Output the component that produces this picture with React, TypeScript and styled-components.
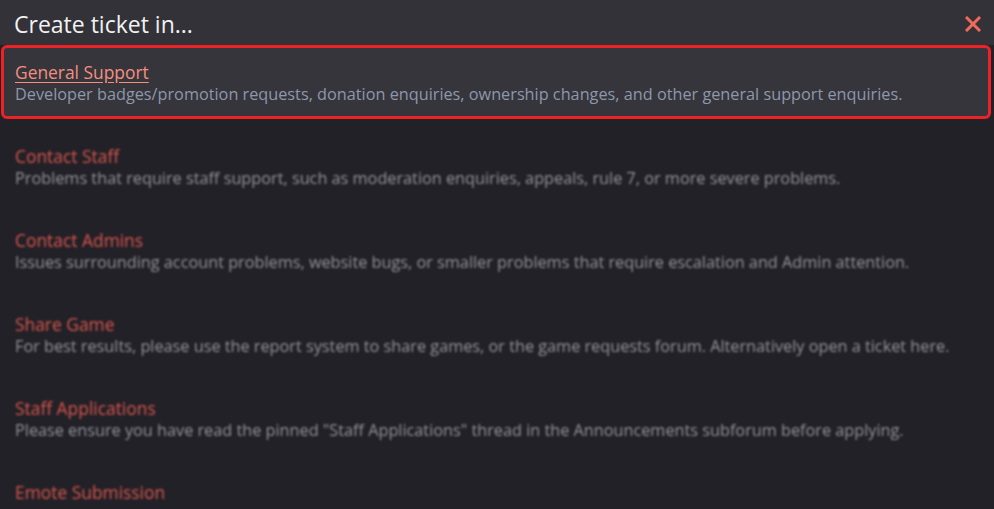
import React from "react";
import styled, { createGlobalStyle } from "styled-components";

interface TicketCategory {
  title: string;
  description?: string;
}

const categories: TicketCategory[] = [
  {
    title: "General Support",
    description:
      "Developer badges/promotion requests, donation enquiries, ownership changes, and other general support enquiries.",
  },
  {
    title: "Contact Staff",
    description:
      "Problems that require staff support, such as moderation enquiries, appeals, rule 7, or more severe problems.",
  },
  {
    title: "Contact Admins",
    description:
      "Issues surrounding account problems, website bugs, or smaller problems that require escalation and Admin attention.",
  },
  {
    title: "Share Game",
    description:
      "For best results, please use the report system to share games, or the game requests forum. Alternatively open a ticket here.",
  },
  {
    title: "Staff Applications",
    description:
      'Please ensure you have read the pinned "Staff Applications" thread in the Announcements subforum before applying.',
  },
  // description sits below the fold in the screenshot
  { title: "Emote Submission" },
];

const GlobalStyle = createGlobalStyle`
  html, body {
    margin: 0;
    padding: 0;
    background-color: #222127;
    overflow: hidden;
  }
  body {
    font-family: "Open Sans", "Noto Sans", sans-serif;
  }
`;

const Dialog = styled.div`
  width: 994px;
  height: 509px;
  overflow: hidden;
  background-color: #222127;
`;

const Header = styled.div`
  display: flex;
  align-items: center;
  justify-content: space-between;
  height: 45px;
  padding: 3px 11px 0 14px;
  box-sizing: border-box;
  background-color: #333238;
`;

const Title = styled.h2`
  margin: 0;
  font-size: 23px;
  font-weight: 400;
  color: #f1f1f3;
`;

const CloseButton = styled.button`
  display: flex;
  align-items: center;
  justify-content: center;
  width: 20px;
  height: 20px;
  padding: 0;
  border: none;
  background: none;
  cursor: pointer;
`;

const List = styled.div`
  display: flex;
  flex-direction: column;
  gap: 10px;
  padding: 0 3px 0 1px;
`;

const Item = styled.div<{ selected?: boolean }>`
  padding: 13px 11px 10px;
  border: 3px solid ${(p) => (p.selected ? "#ec2226" : "transparent")};
  border-radius: 6px;
  background-color: ${(p) => (p.selected ? "#36353b" : "transparent")};
  filter: ${(p) => (p.selected ? "none" : "blur(0.8px)")};
  cursor: pointer;
`;

const ItemTitle = styled.div<{ selected?: boolean }>`
  font-size: 17.4px;
  line-height: 22px;
  color: ${(p) => (p.selected ? "#f48f80" : "#d9564e")};
  text-decoration: ${(p) => (p.selected ? "underline" : "none")};
  text-underline-offset: 3px;
`;

const ItemDescription = styled.div<{ selected?: boolean }>`
  font-size: 16.25px;
  line-height: 23px;
  color: ${(p) => (p.selected ? "#8d98ab" : "#94939c")};
  white-space: nowrap;
`;

const CloseIcon = () => (
  <svg width="16" height="16" viewBox="0 0 16 16">
    <path
      d="M2 2 L14 14 M14 2 L2 14"
      stroke="#f26a5c"
      strokeWidth="3"
      strokeLinecap="square"
    />
  </svg>
);

export default function App() {
  return (
    <>
      <GlobalStyle />
      <Dialog>
        <Header>
          <Title>Create ticket in...</Title>
          <CloseButton aria-label="Close">
            <CloseIcon />
          </CloseButton>
        </Header>
        <List>
          {categories.map((cat, i) => (
            <Item key={cat.title} selected={i === 0}>
              <ItemTitle selected={i === 0}>{cat.title}</ItemTitle>
              {cat.description && (
                <ItemDescription selected={i === 0}>
                  {cat.description}
                </ItemDescription>
              )}
            </Item>
          ))}
        </List>
      </Dialog>
    </>
  );
}
